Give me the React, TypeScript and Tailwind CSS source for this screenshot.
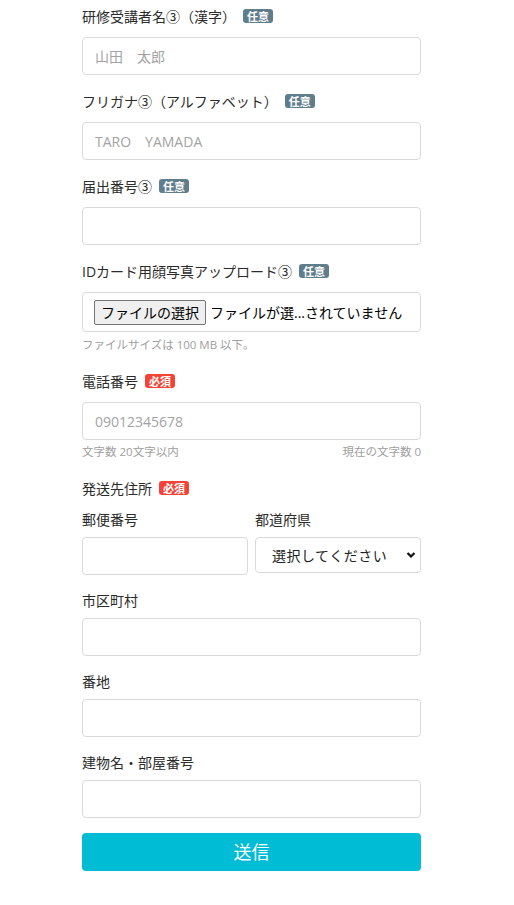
import React from "react";

const font = { fontFamily: '"Open Sans", "Noto Sans CJK JP", sans-serif' };

function Badge({ required }: { required?: boolean }) {
  return (
    <span
      className={`ml-[7px] inline-flex h-[14px] items-center rounded-[3px] px-[4px] text-[11px] font-bold leading-none text-white ${
        required ? "bg-[#f44336]" : "bg-[#607d8b]"
      }`}
    >
      {required ? "必須" : "任意"}
    </span>
  );
}

function Label({ text, required, optional }: { text: string; required?: boolean; optional?: boolean }) {
  return (
    <div className="mb-[9px] flex h-[24px] items-center text-[14px] text-[#2b2b2b]">
      <span>{text}</span>
      {optional && <Badge />}
      {required && <Badge required />}
    </div>
  );
}

function SubLabel({ text }: { text: string }) {
  return <div className="mb-[7px] flex h-[22px] items-center text-[14px] text-[#2b2b2b]">{text}</div>;
}

function TextInput({ placeholder }: { placeholder?: string }) {
  return (
    <input
      type="text"
      placeholder={placeholder}
      className="block h-[38px] w-full rounded-[4px] border border-[#dadada] bg-white px-[12px] text-[14px] text-[#333] outline-none placeholder:text-[#a3a3a3]"
      style={font}
    />
  );
}

export default function App() {
  return (
    <div className="min-h-[905px] bg-white" style={font}>
      <div className="ml-[82px] w-[339px] pt-[4px]">
        <Label text="研修受講者名③（漢字）" optional />
        <TextInput placeholder="山田　太郎" />

        <div className="mt-[14px]">
          <Label text="フリガナ③（アルファベット）" optional />
          <TextInput placeholder="TARO　YAMADA" />
        </div>

        <div className="mt-[14px]">
          <Label text="届出番号③" optional />
          <TextInput />
        </div>

        <div className="mt-[14px]">
          <Label text="IDカード用顔写真アップロード③" optional />
          <div className="flex h-[40px] items-center overflow-hidden whitespace-nowrap rounded-[4px] border border-[#dadada] px-[11px] text-[14px] text-black">
            <span className="flex h-[25px] shrink-0 items-center rounded-[2px] border border-[#767676] bg-[#efefef] px-[6px]">
              ファイルの選択
            </span>
            <span className="ml-[4px]">ファイルが選...されていません</span>
          </div>
          <div className="mt-[4px] h-[18px] text-[11.5px] leading-[18px] text-[#a0a0a0]">
            ファイルサイズは 100 MB 以下。
          </div>
        </div>

        <div className="mt-[15px]">
          <Label text="電話番号" required />
          <TextInput placeholder="09012345678" />
          <div className="mt-[3px] flex h-[18px] justify-between text-[11.5px] leading-[18px] text-[#a0a0a0]">
            <span>文字数 20文字以内</span>
            <span>現在の文字数 0</span>
          </div>
        </div>

        <div className="mt-[15px]">
          <div className="flex h-[24px] items-center text-[14px] text-[#2b2b2b]">
            <span>発送先住所</span>
            <Badge required />
          </div>
          <div className="mt-[8px] grid grid-cols-2 items-start gap-x-[7px]">
            <div>
              <SubLabel text="郵便番号" />
              <TextInput />
            </div>
            <div>
              <SubLabel text="都道府県" />
              <div className="relative">
                <select
                  className="block h-[36px] w-full appearance-none rounded-[4px] border border-[#dadada] bg-white pl-[16px] text-[14px] tracking-[0.5px] text-[#222] outline-none"
                  style={font}
                  defaultValue=""
                >
                  <option value="">選択してください</option>
                </select>
                <svg
                  className="pointer-events-none absolute right-[5px] top-[14px]"
                  width="10"
                  height="8"
                  viewBox="0 0 10 8"
                >
                  <path d="M1.5 2 L5 5.5 L8.5 2" fill="none" stroke="#111" strokeWidth="2.2" />
                </svg>
              </div>
            </div>
          </div>

          <div className="mt-[14px]">
            <SubLabel text="市区町村" />
            <TextInput />
          </div>
          <div className="mt-[14px]">
            <SubLabel text="番地" />
            <TextInput />
          </div>
          <div className="mt-[14px]">
            <SubLabel text="建物名・部屋番号" />
            <TextInput />
          </div>
        </div>

        <button
          type="button"
          className="mt-[15px] flex h-[38px] w-full items-center justify-center rounded-[4px] bg-[#00bcd4] text-[18px] text-white"
          style={font}
        >
          送信
        </button>
      </div>
    </div>
  );
}
